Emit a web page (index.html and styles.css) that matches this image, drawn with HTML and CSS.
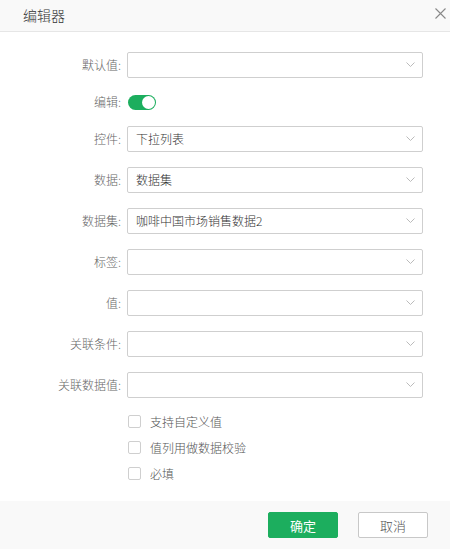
FILE: index.html
```html
<!DOCTYPE html>
<html>
<head>
<meta charset="utf-8">
<link rel="stylesheet" href="styles.css">
</head>
<body>
<div class="dialog">
  <div class="header">
    <span class="title">编辑器</span>
    <svg class="close" width="11" height="11" viewBox="0 0 11 11"><path d="M0.5 0.5L10.5 10.5M10.5 0.5L0.5 10.5" stroke="#888" stroke-width="1.1" fill="none"/></svg>
  </div>
  <div class="body">
    <div class="form">
      <label class="lbl">默认值:</label>
      <div class="select"><span class="val"></span><svg class="arrow" width="9" height="6" viewBox="0 0 9 6"><path d="M0.5 0.5L4.5 4.5L8.5 0.5" stroke="#bbb" fill="none"/></svg></div>

      <label class="lbl lbl-sw">编辑:</label>
      <div class="swrow"><span class="toggle"></span></div>

      <label class="lbl">控件:</label>
      <div class="select"><span class="val">下拉列表</span><svg class="arrow" width="9" height="6" viewBox="0 0 9 6"><path d="M0.5 0.5L4.5 4.5L8.5 0.5" stroke="#bbb" fill="none"/></svg></div>

      <label class="lbl">数据:</label>
      <div class="select"><span class="val">数据集</span><svg class="arrow" width="9" height="6" viewBox="0 0 9 6"><path d="M0.5 0.5L4.5 4.5L8.5 0.5" stroke="#bbb" fill="none"/></svg></div>

      <label class="lbl">数据集:</label>
      <div class="select"><span class="val">咖啡中国市场销售数据2</span><svg class="arrow" width="9" height="6" viewBox="0 0 9 6"><path d="M0.5 0.5L4.5 4.5L8.5 0.5" stroke="#bbb" fill="none"/></svg></div>

      <label class="lbl">标签:</label>
      <div class="select"><span class="val"></span><svg class="arrow" width="9" height="6" viewBox="0 0 9 6"><path d="M0.5 0.5L4.5 4.5L8.5 0.5" stroke="#bbb" fill="none"/></svg></div>

      <label class="lbl">值:</label>
      <div class="select"><span class="val"></span><svg class="arrow" width="9" height="6" viewBox="0 0 9 6"><path d="M0.5 0.5L4.5 4.5L8.5 0.5" stroke="#bbb" fill="none"/></svg></div>

      <label class="lbl">关联条件:</label>
      <div class="select"><span class="val"></span><svg class="arrow" width="9" height="6" viewBox="0 0 9 6"><path d="M0.5 0.5L4.5 4.5L8.5 0.5" stroke="#bbb" fill="none"/></svg></div>

      <label class="lbl">关联数据值:</label>
      <div class="select"><span class="val"></span><svg class="arrow" width="9" height="6" viewBox="0 0 9 6"><path d="M0.5 0.5L4.5 4.5L8.5 0.5" stroke="#bbb" fill="none"/></svg></div>
    </div>
    <div class="checks">
      <div class="check"><span class="box"></span><span>支持自定义值</span></div>
      <div class="check"><span class="box"></span><span>值列用做数据校验</span></div>
      <div class="check"><span class="box"></span><span>必填</span></div>
    </div>
  </div>
  <div class="footer">
    <button class="btn primary">确定</button>
    <button class="btn">取消</button>
  </div>
</div>
</body>
</html>
```

FILE: styles.css
```css
* { box-sizing: border-box; }
html, body { margin: 0; padding: 0; background: #fff; }
body {
  font-family: "Noto Sans CJK SC", "Noto Sans", sans-serif;
  font-size: 12px;
  font-weight: 300;
  color: #333;
  width: 450px;
  height: 549px;
  overflow: hidden;
}
.dialog { width: 450px; height: 549px; display: flex; flex-direction: column; }
.header {
  height: 32px;
  background: #f9f9f9;
  border-bottom: 1px solid #e6e6e6;
  display: flex;
  align-items: center;
  justify-content: space-between;
  padding: 0 4px 1px 23px;
}
.title { font-size: 14px; color: #333; line-height: 14px; }
.close { display: block; margin-top: -3px; }
.body { flex: 1; padding-top: 20px; }
.form {
  display: grid;
  grid-template-columns: 121px 296px;
  column-gap: 6px;
  row-gap: 15px;
  align-items: center;
}
.lbl { text-align: right; color: #666; line-height: 14px; white-space: nowrap; }
.select {
  height: 26px;
  border: 1px solid #cfcfcf;
  border-radius: 2px;
  display: flex;
  align-items: center;
  justify-content: space-between;
  padding: 0 7px 0 8px;
  color: #333;
}
.val { line-height: 14px; }
.arrow { display: block; }
.swrow { height: 18px; display: flex; align-items: center; padding-left: 1px; }
.toggle {
  position: relative;
  width: 28px;
  height: 15px;
  border-radius: 8px;
  background: #1cae5e;
  display: block;
}
.toggle::after {
  content: "";
  position: absolute;
  right: 1px;
  top: 1px;
  width: 13px;
  height: 13px;
  border-radius: 50%;
  background: #fff;
}
.checks { padding: 10px 0 0 128px; display: flex; flex-direction: column; }
.check { height: 26px; display: flex; align-items: center; gap: 9px; color: #555; }
.box {
  width: 13px;
  height: 13px;
  border: 1px solid #cfcfcf;
  border-radius: 2px;
  background: #fff;
  display: block;
}
.footer {
  height: 48px;
  background: #f9f9f9;
  display: flex;
  align-items: center;
  justify-content: flex-end;
  gap: 20px;
  padding: 0 22px 0 0;
}
.btn {
  width: 70px;
  height: 26px;
  font-family: inherit;
  font-size: 13px;
  font-weight: 300;
  border: 1px solid #c8c8c8;
  background: #fff;
  color: #555;
  border-radius: 2px;
  padding: 0;
}
.btn.primary { background: #1cae5e; border-color: #1cae5e; color: #fff; font-weight: 400; }
```
